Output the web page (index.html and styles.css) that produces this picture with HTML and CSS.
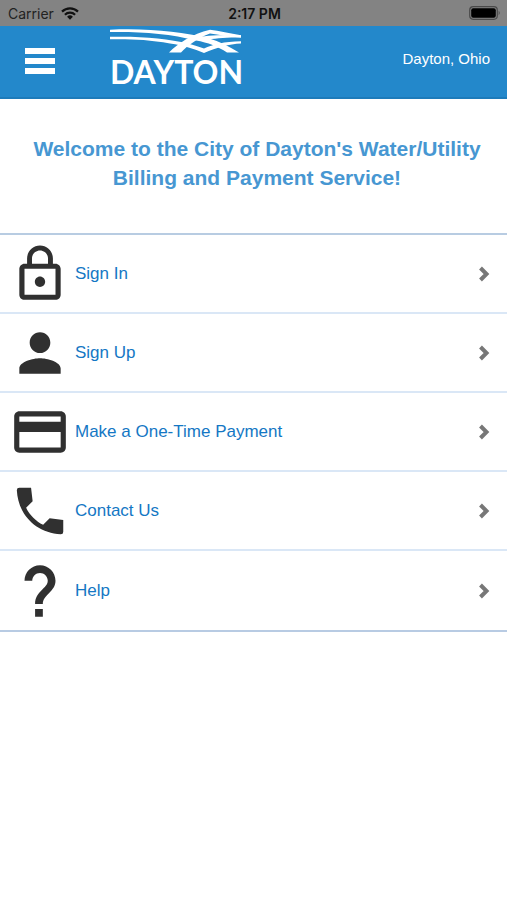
FILE: index.html
```html
<!DOCTYPE html>
<html lang="en">
<head>
<meta charset="utf-8">
<meta name="viewport" content="width=device-width, initial-scale=1">
<title>City of Dayton Water/Utility Billing</title>
<link rel="stylesheet" href="styles.css">
</head>
<body>
<div class="status">
  <div class="carrier"><span>Carrier</span>
    <svg class="wifi" viewBox="0 0 18 13" aria-hidden="true"><g fill="none" stroke="#111" stroke-width="2.2"><path d="M1 4.6a11.500 11.500 0 0 1 16 0"/><path d="M3.900 7.700a7.400 7.400 0 0 1 10.200 0"/></g><path d="M6.100 9.700a4.200 4.200 0 0 1 5.800 0L9 12.700z" fill="#111"/></svg>
  </div>
  <span class="time">2:17 PM</span>
  <svg class="battery" viewBox="0 0 32 14" aria-hidden="true"><rect x=".7" y=".7" width="27.600" height="12.600" rx="3.500" fill="none" stroke="#4a4a4a" stroke-width="1.200"/><rect x="2.200" y="2.200" width="24.600" height="9.600" rx="2" fill="#000"/><path d="M29.700 4.800q2 2.200 0 4.400z" fill="#4a4a4a"/></svg>
</div>
<header class="bar">
  <button class="menu" type="button" aria-label="Menu"><span class="line"></span><span class="line"></span><span class="line"></span></button>
  <div class="logo">
    <svg class="swoosh" viewBox="0 0 132 24" aria-hidden="true"><g fill="#fff"><path d="M0 .8C38-1 72 3 98 9C110 12.500 120 18 129 23.500H117C108 17.500 98 13.500 86 11.500C60 4.500 30 2.500 0 3z"/><path d="M0 7.800C30 7 58 9.500 78 14.500C84 16 89 18 94 19.500C103 15.500 114 12.500 131 12.300V14.500C119 15 107 18.500 94 24C84 20 74 16.500 60 14.500C38 10.500 20 10 0 10.300z"/><path d="M59 23.500C68 14.500 82 5 100 .8C109 2 120 4.500 131 6.300V8.600C119 7.500 109 6 100 4.500C88 9 78 16 71 23.500z"/><path d="M83 9C96 6 113 5.500 131 6.300V8.600C117 8 104 10 95 10.500z"/></g></svg>
    <span class="name">DAYTON</span>
  </div>
  <span class="place">Dayton, Ohio</span>
</header>
<main>
  <h1>Welcome to the City of Dayton's Water/Utility Billing and Payment Service!</h1>
  <nav class="list">
    <a href="#signin"><svg class="icon" viewBox="0 0 24 24" aria-hidden="true"><path d="M12 17c1.100 0 2-.9 2-2s-.9-2-2-2-2 .9-2 2 .9 2 2 2zm6-9h-1V6c0-2.760-2.240-5-5-5S7 3.240 7 6v2H6c-1.100 0-2 .9-2 2v10c0 1.100.9 2 2 2h12c1.100 0 2-.9 2-2V10c0-1.100-.9-2-2-2zM8.900 6c0-1.710 1.390-3.100 3.100-3.100s3.100 1.390 3.100 3.100v2H8.900V6zM18 20H6V10h12v10z"/></svg><span>Sign In</span><svg class="chevron" viewBox="0 0 12 16" aria-hidden="true"><path d="M2.500 2l6 6-6 6"/></svg></a>
    <a href="#signup"><svg class="icon" viewBox="0 0 24 24" aria-hidden="true"><path d="M12 12c2.210 0 4-1.790 4-4s-1.790-4-4-4-4 1.790-4 4 1.790 4 4 4zm0 2c-2.670 0-8 1.340-8 4v2h16v-2c0-2.660-5.330-4-8-4z"/></svg><span>Sign Up</span><svg class="chevron" viewBox="0 0 12 16" aria-hidden="true"><path d="M2.500 2l6 6-6 6"/></svg></a>
    <a href="#payment"><svg class="icon" viewBox="0 0 24 24" aria-hidden="true"><path d="M20 4H4c-1.110 0-1.990.89-1.990 2L2 18c0 1.110.89 2 2 2h16c1.110 0 2-.89 2-2V6c0-1.110-.89-2-2-2zm0 14H4v-6h16v6zm0-10H4V6h16v2z"/></svg><span>Make a One-Time Payment</span><svg class="chevron" viewBox="0 0 12 16" aria-hidden="true"><path d="M2.500 2l6 6-6 6"/></svg></a>
    <a href="#contact"><svg class="icon" viewBox="0 0 24 24" aria-hidden="true"><path d="M21 15.460l-5.270-.61-2.520 2.520c-2.830-1.440-5.150-3.750-6.590-6.590l2.530-2.530L8.540 3H4Q3 3 3.030 4C3.500 13.500 10.500 20.500 20 20.970Q21 21 21 20z"/></svg><span>Contact Us</span><svg class="chevron" viewBox="0 0 12 16" aria-hidden="true"><path d="M2.500 2l6 6-6 6"/></svg></a>
    <a href="#help"><svg class="icon" viewBox="0 0 24 24" aria-hidden="true"><path d="M10.100 19h3v3h-3zM12 2C8.690 2 6 4.690 6 8h3c0-1.650 1.350-3 3-3s3 1.350 3 3c0 3-4.900 4-4.900 9h3c0-3.600 4.900-4.800 4.900-9 0-3.310-2.690-6-6-6z"/></svg><span>Help</span><svg class="chevron" viewBox="0 0 12 16" aria-hidden="true"><path d="M2.500 2l6 6-6 6"/></svg></a>
  </nav>
</main>
</body>
</html>
```
FILE: styles.css
```css
* { box-sizing: border-box; }
body { margin: 0; background: #fff; font-family: "Liberation Sans", Arial, sans-serif; }
.status { display: grid; grid-template-columns: 1fr auto 1fr; align-items: center; height: 26px; padding: 0 6px 0 8px; background: #838383; color: #111; font-family: Inter, sans-serif; }
.carrier { display: flex; align-items: center; gap: 7px; color: #222; font-size: 14px; }
.wifi { width: 18px; height: 13px; }
.time { font-weight: 600; font-size: 14px; }
.battery { width: 32px; height: 14px; justify-self: end; }
.bar { display: flex; align-items: center; height: 73px; padding: 0 17px 4px 25px; background: #2388cb; border-bottom: 2px solid #1d7bba; color: #fff; }
.menu { display: flex; flex-direction: column; gap: 4px; width: 30px; padding: 2px 0 0; border: 0; background: none; }
.line { width: 30px; height: 6px; background: #fff; }
.logo { display: flex; flex-direction: column; gap: 1px; width: 132px; margin-left: 55px; }
.swoosh { width: 132px; height: 24px; }
.name { font-family: Lato, sans-serif; font-weight: 700; font-size: 32px; line-height: 36px; }
.place { margin-left: auto; padding-bottom: 2px; font-size: 15px; }
h1 { margin: 0; padding: 35px 21px 41px 28px; color: #4797d2; font-size: 21px; line-height: 29px; text-align: center; }
.list { display: grid; grid-auto-rows: 1fr; min-height: 399px; border-top: 2px solid #b8cce2; border-bottom: 2px solid #b8cbe3; }
.list a { display: flex; align-items: center; padding: 0 17px 0 9px; border-bottom: 2px solid #dae7f6; color: #1477c4; font-size: 17px; text-decoration: none; }
.list a:last-child { border-bottom: 0; }
.icon { width: 62px; height: 62px; margin-right: 4px; fill: #303030; }
.chevron { width: 12px; height: 16px; margin-left: auto; fill: none; stroke: #777; stroke-width: 4; }
```
